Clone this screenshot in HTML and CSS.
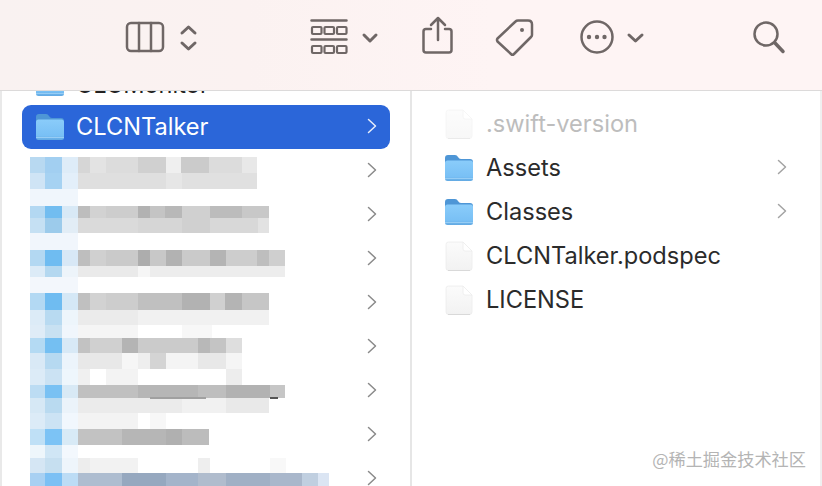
FILE: index.html
```html
<!DOCTYPE html>
<html lang="en">
<head>
<meta charset="utf-8">
<title>Finder</title>
<link rel="stylesheet" href="styles.css">
</head>
<body>
<svg class="defs" width="0" height="0" aria-hidden="true">
  <defs>
    <linearGradient id="fbody" x1="0" y1="0" x2="0" y2="1">
      <stop offset="0" stop-color="#8accfa"/>
      <stop offset="0.78" stop-color="#79c0f5"/>
      <stop offset="1" stop-color="#62a9e2"/>
    </linearGradient>
    <linearGradient id="dbody" x1="0" y1="0" x2="0" y2="1">
      <stop offset="0" stop-color="#fbfbfb"/>
      <stop offset="1" stop-color="#f2f2f2"/>
    </linearGradient>
    <symbol id="folder" viewBox="0 0 28 26">
      <path d="M0 3q0-3 3-3h7q2 0 3 2t3 2h9q3 0 3 3v6H0z" fill="#4e96d6"/>
      <rect y="5.500" width="28" height="20.500" rx="2.500" fill="url(#fbody)"/>
      <rect y="23" width="28" height="1" fill="#a8d7f8" opacity=".7"/>
    </symbol>
    <symbol id="doc" viewBox="0 0 28 30">
      <path d="M3.500 1H18L27 10V27q0 2.500-2.500 2.500H3.500Q1 29.500 1 27V3.500Q1 1 3.500 1z" fill="url(#dbody)" stroke="#ececec" stroke-width=".8"/>
      <path d="M18 1V8q0 2 2 2h7z" fill="#fff" stroke="#ececec" stroke-width=".8"/>
      <path d="M3 29.500H25" stroke="#d9d9d9"/>
    </symbol>
    <symbol id="chev" viewBox="0 0 10 16">
      <path d="M1.500 1.500L8.500 8L1.500 14.500" fill="none" stroke="currentColor" stroke-width="1.500" stroke-linecap="round" stroke-linejoin="round"/>
    </symbol>
  </defs>
</svg>

<header class="toolbar">
  <svg class="toolicons" width="822" height="90" viewBox="0 0 822 90" fill="none" stroke="#6f6766" stroke-width="2.500" stroke-linecap="round" stroke-linejoin="round" role="img" aria-label="Toolbar">
    <rect x="127" y="23" width="36" height="28" rx="4"/>
    <path d="M139 23V51M151 23V51"/>
    <path d="M182 33L188.500 27L195 33M182 43L188.500 49L195 43" stroke-width="3"/>
    <path d="M311.500 20.500H346.500M311.500 39.500H346.500"/>
    <g stroke-width="2.200">
      <rect x="312" y="27" width="9.500" height="7" rx="1"/><rect x="324.500" y="27" width="9.500" height="7" rx="1"/><rect x="337" y="27" width="9.500" height="7" rx="1"/>
      <rect x="312" y="46" width="9.500" height="7" rx="1"/><rect x="324.500" y="46" width="9.500" height="7" rx="1"/><rect x="337" y="46" width="9.500" height="7" rx="1"/>
    </g>
    <path d="M364 35L370 41L376 35" stroke-width="3"/>
    <path d="M431 29H426q-2.500 0-2.500 2.500V50q0 2.500 2.500 2.500h23q2.500 0 2.500-2.500V31.500q0-2.500-2.500-2.500H445"/>
    <path d="M438 40V18M431 25L438 18L445 25"/>
    <path d="M518 20.500H528q4 0 4 4V35q0 1-1 2L514 54q-1.500 1.500-3 0L497.500 41.500q-1-1.500 0-3L515.500 21.500q1-1 2.500-1z"/>
    <circle cx="522" cy="30" r="2" fill="#6f6766" stroke="none"/>
    <circle cx="597" cy="37" r="15.500"/>
    <g fill="#6f6766" stroke="none"><circle cx="589" cy="37" r="2.200"/><circle cx="597" cy="37" r="2.200"/><circle cx="604.500" cy="37" r="2.200"/></g>
    <path d="M629 35L635.500 41L642 35" stroke-width="3"/>
    <circle cx="766" cy="34" r="11.500"/>
    <path d="M775 43L783 51.500" stroke-width="3.500"/>
  </svg>
</header>

<main class="browser">
  <section class="column column-left">
    <ul class="list list-left">
      <li class="row row-clipped">
        <svg class="icon-folder"><use href="#folder"/></svg>
        <span class="name">CLCMonitor</span>
      </li>
      <li class="row row-selected">
        <svg class="icon-folder"><use href="#folder"/></svg>
        <span class="name">CLCNTalker</span>
        <svg class="chev"><use href="#chev"/></svg>
      </li>
      <li class="row"><svg class="chev"><use href="#chev"/></svg></li>
      <li class="row"><svg class="chev"><use href="#chev"/></svg></li>
      <li class="row"><svg class="chev"><use href="#chev"/></svg></li>
      <li class="row"><svg class="chev"><use href="#chev"/></svg></li>
      <li class="row"><svg class="chev"><use href="#chev"/></svg></li>
      <li class="row"><svg class="chev"><use href="#chev"/></svg></li>
      <li class="row"><svg class="chev"><use href="#chev"/></svg></li>
      <li class="row"><svg class="chev"><use href="#chev"/></svg></li>
    </ul>
    <svg class="mosaic" width="330" height="336" viewBox="0 150 330 336" aria-hidden="true" shape-rendering="crispEdges">
      <!-- row 1 -->
      <rect x="30" y="157" width="15" height="16" fill="#b8d9f1"/><rect x="45" y="157" width="17" height="16" fill="#a2cff1"/><rect x="62" y="157" width="16" height="16" fill="#deecf8"/>
      <rect x="78" y="157" width="12" height="16" fill="#d6d6d6"/><rect x="90" y="157" width="16" height="16" fill="#e3e3e3"/><rect x="106" y="157" width="32" height="16" fill="#dcdcdc"/><rect x="138" y="157" width="28" height="16" fill="#d0d0d0"/><rect x="166" y="157" width="15" height="16" fill="#efefef"/><rect x="181" y="157" width="28" height="16" fill="#cbcbcb"/><rect x="209" y="157" width="33" height="16" fill="#dcdcdc"/><rect x="242" y="157" width="15" height="16" fill="#e8e8e8"/>
      <rect x="30" y="173" width="15" height="16" fill="#cfe4f5"/><rect x="45" y="173" width="17" height="16" fill="#a6d2f2"/><rect x="62" y="173" width="16" height="16" fill="#e3effa"/>
      <rect x="78" y="173" width="88" height="16" fill="#dfdfdf"/><rect x="166" y="173" width="16" height="16" fill="#e6e6e6"/><rect x="182" y="173" width="75" height="16" fill="#e0e0e0"/>
      <rect x="30" y="189" width="48" height="17" fill="#f0f6fc"/>
      <!-- row 2 -->
      <rect x="30" y="206" width="15" height="12" fill="#b3d8f2"/><rect x="45" y="206" width="17" height="12" fill="#72bdf0"/><rect x="62" y="206" width="16" height="12" fill="#d8e9f6"/>
      <rect x="78" y="206" width="12" height="12" fill="#bdbdbd"/><rect x="90" y="206" width="16" height="12" fill="#d2d2d2"/><rect x="106" y="206" width="32" height="12" fill="#cdcdcd"/><rect x="138" y="206" width="12" height="12" fill="#b2b2b2"/><rect x="150" y="206" width="15" height="12" fill="#c4c4c4"/><rect x="165" y="206" width="17" height="12" fill="#b8b8b8"/><rect x="182" y="206" width="28" height="12" fill="#d0d0d0"/><rect x="210" y="206" width="32" height="12" fill="#bcbcbc"/><rect x="242" y="206" width="27" height="12" fill="#c8c8c8"/>
      <rect x="30" y="218" width="15" height="15" fill="#c5e0f3"/><rect x="45" y="218" width="17" height="15" fill="#9ccbeb"/><rect x="62" y="218" width="16" height="15" fill="#e2edf6"/>
      <rect x="78" y="218" width="60" height="15" fill="#dadada"/><rect x="138" y="218" width="44" height="15" fill="#d6d6d6"/><rect x="182" y="218" width="28" height="15" fill="#d0d0d0"/><rect x="210" y="218" width="48" height="15" fill="#d8d8d8"/><rect x="258" y="218" width="11" height="15" fill="#e2e2e2"/>
      <rect x="30" y="233" width="48" height="17" fill="#f1f6fc"/>
      <!-- row 3 -->
      <rect x="30" y="250" width="15" height="16" fill="#b3d8f2"/><rect x="45" y="250" width="17" height="16" fill="#6fbcf1"/><rect x="62" y="250" width="16" height="16" fill="#d8e8f6"/>
      <rect x="78" y="250" width="12" height="16" fill="#bebebe"/><rect x="90" y="250" width="16" height="16" fill="#d0d0d0"/><rect x="106" y="250" width="32" height="16" fill="#cacaca"/><rect x="138" y="250" width="12" height="16" fill="#adadad"/><rect x="150" y="250" width="16" height="16" fill="#c8c8c8"/><rect x="166" y="250" width="16" height="16" fill="#b2b2b2"/><rect x="182" y="250" width="28" height="16" fill="#cacaca"/><rect x="210" y="250" width="16" height="16" fill="#b4b4b4"/><rect x="226" y="250" width="31" height="16" fill="#cdcdcd"/><rect x="257" y="250" width="12" height="16" fill="#bebebe"/><rect x="269" y="250" width="16" height="16" fill="#cfcfcf"/>
      <rect x="30" y="266" width="15" height="11" fill="#dcebf7"/><rect x="45" y="266" width="17" height="11" fill="#b4d8f0"/><rect x="62" y="266" width="16" height="11" fill="#edf4fa"/>
      <rect x="78" y="266" width="60" height="11" fill="#eaeaea"/><rect x="138" y="266" width="12" height="11" fill="#f6f6f6"/><rect x="150" y="266" width="135" height="11" fill="#ededed"/>
      <rect x="30" y="277" width="48" height="16" fill="#f3f7fc"/>
      <!-- row 4 -->
      <rect x="30" y="293" width="15" height="17" fill="#b3d9f3"/><rect x="45" y="293" width="17" height="17" fill="#6fbcf1"/><rect x="62" y="293" width="16" height="17" fill="#d5e8f6"/>
      <rect x="78" y="293" width="12" height="17" fill="#c0c0c0"/><rect x="90" y="293" width="16" height="17" fill="#d2d2d2"/><rect x="106" y="293" width="32" height="17" fill="#cdcdcd"/><rect x="138" y="293" width="44" height="17" fill="#c0c0c0"/><rect x="182" y="293" width="28" height="17" fill="#b2b2b2"/><rect x="210" y="293" width="15" height="17" fill="#d0d0d0"/><rect x="225" y="293" width="17" height="17" fill="#b4b4b4"/><rect x="242" y="293" width="27" height="17" fill="#c6c6c6"/>
      <rect x="30" y="310" width="15" height="15" fill="#dcebf7"/><rect x="45" y="310" width="17" height="15" fill="#b8daf1"/><rect x="62" y="310" width="16" height="15" fill="#edf5fb"/>
      <rect x="78" y="310" width="60" height="15" fill="#ebebeb"/><rect x="138" y="310" width="131" height="15" fill="#f1f1f1"/>
      <rect x="30" y="325" width="15" height="13" fill="#dfecf7"/><rect x="45" y="325" width="17" height="13" fill="#c8e1f2"/><rect x="62" y="325" width="16" height="13" fill="#f0f6fc"/>
      <rect x="78" y="325" width="60" height="13" fill="#f5f5f5"/><rect x="182" y="325" width="30" height="13" fill="#f7f7f7"/>
      <!-- row 5 -->
      <rect x="30" y="338" width="15" height="15" fill="#b4daf3"/><rect x="45" y="338" width="17" height="15" fill="#74bff2"/><rect x="62" y="338" width="16" height="15" fill="#d8e9f6"/>
      <rect x="78" y="338" width="12" height="15" fill="#c2c2c2"/><rect x="90" y="338" width="32" height="15" fill="#d0d0d0"/><rect x="122" y="338" width="16" height="15" fill="#b4b4b4"/><rect x="138" y="338" width="60" height="15" fill="#cbcbcb"/><rect x="198" y="338" width="12" height="15" fill="#b8b8b8"/><rect x="210" y="338" width="16" height="15" fill="#c4c4c4"/><rect x="226" y="338" width="16" height="15" fill="#dedede"/>
      <rect x="30" y="353" width="15" height="16" fill="#d9e9f6"/><rect x="45" y="353" width="17" height="16" fill="#b6d9f1"/><rect x="62" y="353" width="16" height="16" fill="#ecf4fb"/>
      <rect x="78" y="353" width="44" height="16" fill="#e8e8e8"/><rect x="122" y="353" width="16" height="16" fill="#f6f6f6"/><rect x="138" y="353" width="12" height="16" fill="#eeeeee"/><rect x="150" y="353" width="16" height="16" fill="#d4d4d4"/><rect x="166" y="353" width="32" height="16" fill="#f4f4f4"/><rect x="198" y="353" width="28" height="16" fill="#e8e8e8"/><rect x="226" y="353" width="16" height="16" fill="#f5f5f5"/>
      <rect x="30" y="369" width="15" height="16" fill="#dcebf7"/><rect x="45" y="369" width="17" height="16" fill="#cbe2f3"/><rect x="62" y="369" width="16" height="16" fill="#eef6fc"/>
      <rect x="78" y="369" width="12" height="16" fill="#f0f0f0"/><rect x="106" y="369" width="32" height="16" fill="#f3f3f3"/><rect x="226" y="369" width="16" height="16" fill="#ededed"/>
      <!-- row 6 -->
      <rect x="30" y="385" width="15" height="13" fill="#bcdcf3"/><rect x="45" y="385" width="17" height="13" fill="#79c1f3"/><rect x="62" y="385" width="16" height="13" fill="#d8e9f5"/>
      <rect x="78" y="385" width="60" height="13" fill="#c0c0c0"/><rect x="138" y="385" width="60" height="13" fill="#b6b6b6"/><rect x="198" y="385" width="28" height="13" fill="#bebebe"/><rect x="226" y="385" width="44" height="13" fill="#b2b2b2"/><rect x="270" y="385" width="15" height="13" fill="#c6c6c6"/>
      <rect x="30" y="398" width="15" height="15" fill="#d6e8f5"/><rect x="45" y="398" width="17" height="15" fill="#b9daf0"/><rect x="62" y="398" width="16" height="15" fill="#ebf3fa"/>
      <rect x="78" y="398" width="104" height="15" fill="#ebebeb"/><rect x="182" y="398" width="44" height="15" fill="#f1f1f1"/><rect x="226" y="398" width="43" height="15" fill="#e9e9e9"/>
      <rect x="150" y="397" width="56" height="2" fill="#a0a0a0"/><rect x="270" y="397" width="8" height="2" fill="#555555"/>
      <rect x="30" y="413" width="15" height="16" fill="#dcebf7"/><rect x="45" y="413" width="17" height="16" fill="#cce3f4"/><rect x="62" y="413" width="16" height="16" fill="#f1f7fd"/>
      <rect x="78" y="413" width="60" height="16" fill="#f3f3f3"/><rect x="150" y="413" width="16" height="16" fill="#f7f7f7"/>
      <!-- row 7 -->
      <rect x="30" y="429" width="15" height="16" fill="#bfe0f6"/><rect x="45" y="429" width="17" height="16" fill="#7cc3f5"/><rect x="62" y="429" width="16" height="16" fill="#d8eaf6"/>
      <rect x="78" y="429" width="44" height="16" fill="#c2c2c2"/><rect x="122" y="429" width="44" height="16" fill="#b6b6b6"/><rect x="166" y="429" width="16" height="16" fill="#b0b0b0"/><rect x="182" y="429" width="27" height="16" fill="#bcbcbc"/>
      <rect x="30" y="445" width="15" height="13" fill="#eef6fb"/><rect x="45" y="445" width="17" height="13" fill="#d0e6f5"/><rect x="62" y="445" width="16" height="13" fill="#f3f8fd"/>
      <rect x="30" y="458" width="15" height="15" fill="#d5e6f4"/><rect x="45" y="458" width="17" height="15" fill="#c6dff0"/><rect x="62" y="458" width="16" height="15" fill="#eef5fb"/>
      <rect x="78" y="458" width="12" height="15" fill="#ededed"/><rect x="90" y="458" width="48" height="15" fill="#f2f2f2"/><rect x="198" y="458" width="12" height="15" fill="#eeeeee"/><rect x="270" y="458" width="16" height="15" fill="#f8f8f8"/>
      <!-- row 8 -->
      <rect x="30" y="473" width="15" height="13" fill="#a8d0f2"/><rect x="45" y="473" width="17" height="13" fill="#7cc0f4"/><rect x="62" y="473" width="16" height="13" fill="#bcdcf5"/>
      <rect x="78" y="473" width="44" height="13" fill="#aebdd0"/><rect x="122" y="473" width="44" height="13" fill="#96a8bf"/><rect x="166" y="473" width="32" height="13" fill="#a4b4ca"/><rect x="198" y="473" width="28" height="13" fill="#b0bccd"/><rect x="226" y="473" width="44" height="13" fill="#a0b0c5"/><rect x="270" y="473" width="32" height="13" fill="#a9b7cb"/><rect x="302" y="473" width="16" height="13" fill="#c0cfe0"/><rect x="318" y="473" width="11" height="13" fill="#dbe5f3"/>
    </svg>
  </section>
  <section class="column column-right">
    <ul class="list list-right">
      <li class="row row-dim">
        <svg class="icon-doc"><use href="#doc"/></svg>
        <span class="name">.swift-version</span>
      </li>
      <li class="row">
        <svg class="icon-folder"><use href="#folder"/></svg>
        <span class="name">Assets</span>
        <svg class="chev"><use href="#chev"/></svg>
      </li>
      <li class="row">
        <svg class="icon-folder"><use href="#folder"/></svg>
        <span class="name">Classes</span>
        <svg class="chev"><use href="#chev"/></svg>
      </li>
      <li class="row">
        <svg class="icon-doc"><use href="#doc"/></svg>
        <span class="name">CLCNTalker.podspec</span>
      </li>
      <li class="row">
        <svg class="icon-doc"><use href="#doc"/></svg>
        <span class="name">LICENSE</span>
      </li>
    </ul>
  </section>
</main>
<div class="watermark">@稀土掘金技术社区</div>
</body>
</html>
```
FILE: styles.css
```css
* { box-sizing: border-box; }
html, body { margin: 0; padding: 0; height: 100%; }
body {
  width: 822px;
  height: 486px;
  overflow: hidden;
  position: relative;
  display: flex;
  flex-direction: column;
  background: #fff;
  font-family: Inter, "Noto Sans", "Liberation Sans", sans-serif;
  color: #2b2b2b;
}
.defs { position: absolute; }

.toolbar {
  position: relative;
  z-index: 2;
  flex: 0 0 91px;
  height: 91px;
  background: linear-gradient(90deg, #f9f2f1 0, #fbf2f1 30%, #fef4f4 60%);
  border-bottom: 1px solid #dcdada;
}
.toolicons { display: block; }

.browser {
  flex: 1;
  display: flex;
  min-height: 0;
  border-left: 2px solid #e9e9e9;
  border-right: 2px solid #f0f0f0;
}
.column { position: relative; overflow: hidden; }
.column-left {
  flex: 0 0 410px;
  border-right: 2px solid #e6e6e6;
}
.column-right { flex: 1; }

.list { list-style: none; margin: 0; padding: 0; }
.list-left { margin-top: -30px; padding: 0 20px; }
.list-right { padding: 11px 34px 0 33px; }

.row {
  display: flex;
  align-items: center;
  height: 44px;
  flex-shrink: 0;
}
.name {
  font-size: 23.6px;
  line-height: 28px;
  white-space: nowrap;
}
.icon-folder { width: 28px; height: 26px; flex: 0 0 28px; }
.icon-doc { width: 28px; height: 30px; flex: 0 0 28px; }
.list-left .icon-folder { margin-left: 14px; margin-right: 12px; }
.list-right .name { margin-left: 13px; }

.chev {
  width: 10px;
  height: 16px;
  margin-left: auto;
  margin-bottom: 2px;
  color: #8a8a8a;
}
.list-left .chev { margin-right: 13px; }
.list-right .chev { margin-right: -1px; color: #a3a3a3; }

.row-clipped .name { padding-top: 3px; color: #222; }
.row-selected {
  background: #2b66d9;
  border-radius: 9px;
  color: #fff;
}
.row-selected .chev { color: #e8eefb; }
.row-dim .name { color: #bdbdbd; }
.row-dim .icon-doc { opacity: .55; }

.mosaic {
  position: absolute;
  left: -2px;
  top: 59px;
  filter: blur(.7px);
}

.watermark {
  position: absolute;
  right: 16px;
  top: 448px;
  font-family: "Noto Sans CJK SC", sans-serif;
  font-size: 17.2px;
  line-height: 22px;
  color: #b4b4b4;
}
```
